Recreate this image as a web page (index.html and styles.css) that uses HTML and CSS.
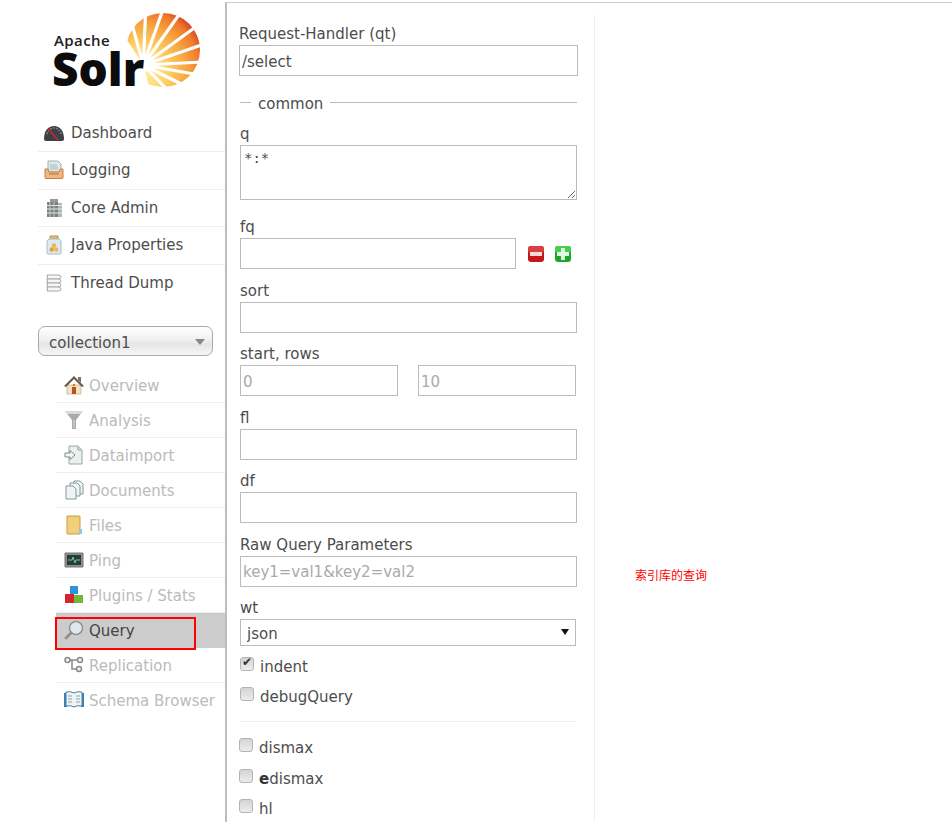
FILE: index.html
```html
<!DOCTYPE html>
<html lang="en">
<head>
    <meta charset="UTF-8">
    <title>Solr Admin</title>
    <link rel="stylesheet" href="styles.css">
</head>
<body>
    <div id="wrapper">
        <!-- Left menu -->
        <div id="sidebar">
            <svg class="logo" width="225" height="114" viewBox="0 0 225 114">
                <defs>
                    <radialGradient id="sun" gradientUnits="userSpaceOnUse" cx="140" cy="72" r="72">
                        <stop offset="0" stop-color="#fff2a6"/>
                        <stop offset="0.35" stop-color="#fdd56e"/>
                        <stop offset="0.65" stop-color="#f8a53f"/>
                        <stop offset="0.85" stop-color="#ef7a2c"/>
                        <stop offset="1" stop-color="#cf2f1f"/>
                    </radialGradient>
                </defs>
                <circle cx="163" cy="50" r="37" fill="url(#sun)"/>
                <g stroke="#fff" stroke-width="3.2">
                    <path d="M143.3 65L121.9 -12.1M143.3 65L146.7 -14.9M143.3 65L170 -10.4M143.3 65L189.6 -.2M143.3 65L208 18M143.3 65L219 39M143.3 65L223 61M143.3 65L222 79M143.3 65L215 101M143.3 65L199 122.5"/>
                </g>
                <path d="M143.3 65L99 -3L60 60L100 140L164 142Z" fill="#fff"/>
                <circle cx="143.3" cy="65" r="7" fill="#fff"/>
                <text class="logo-apache" x="54" y="46">Apache</text>
                <text class="logo-solr" x="52" y="86">Solr</text>
            </svg>

            <ul class="main-nav">
                <li>
                    <svg class="icon" viewBox="0 0 20 20"><path d="M0 16C0 8 4 3 10 3s10 5 10 13c0 1-1 2-2 2H2c-1 0-2-1-2-2z" fill="#3d4045"/><path d="M3 11C4 7 7 5 10 5s6 2 7 6" fill="none" stroke="#85888d" stroke-width="1.5" stroke-dasharray="1.5 1.5"/><path d="M4 6l10 11" stroke="#d4232b" stroke-width="1.6"/></svg>
                    Dashboard
                </li>
                <li>
                    <svg class="icon" viewBox="0 0 20 20"><path d="M4 1h10l3 3v8H4z" fill="#dfe9e8" stroke="#9db3b3"/><path d="M6 5h7M6 7h8M6 9h8" stroke="#a9bcbc"/><path d="M1 9h3l1 3h10l1-3h3v8.500q0 1-1 1H2q-1 0-1-1z" fill="#eeb680" stroke="#c9813f"/><path d="M5 14h10" stroke="#b9733a"/></svg>
                    Logging
                </li>
                <li>
                    <svg class="icon" viewBox="0 0 20 20"><path d="M3 4h11v15H3z" fill="#7d8080"/><path d="M14 5h4v14h-4z" fill="#aab9ac"/><path d="M3 7.500h15M3 11h15M3 15h15" stroke="#e7e9e7" stroke-width="1.200"/><path d="M6 4v15M10 4v15" stroke="#c5c8c6"/><path d="M6 1h8v3H6z" fill="#999"/></svg>
                    Core Admin
                </li>
                <li>
                    <svg class="icon" viewBox="0 0 20 20"><path d="M6 1h8v3H6z" fill="#e6bf6f" stroke="#b99143"/><path d="M5 4h10q2 1 2 3v11q0 1-1 1H4q-1 0-1-1V7q0-2 2-3z" fill="#dceaf5" stroke="#a9bccb"/><circle cx="10" cy="10.500" r="2.200" fill="#e9b949"/><circle cx="7.700" cy="14.500" r="2.200" fill="#dca536"/><circle cx="12.300" cy="14.500" r="2.200" fill="#e9b949"/></svg>
                    Java Properties
                </li>
                <li>
                    <svg class="icon" viewBox="0 0 20 20" fill="#f6f6f6" stroke="#a6a8a8"><path d="M3 2h11q3 0 3 2t-3 2H3q1-2 0-4z"/><path d="M3 6h11q3 0 3 2t-3 2H3q1-2 0-4z"/><path d="M3 10h11q3 0 3 2t-3 2H3q1-2 0-4z"/><path d="M3 14h11q3 0 3 2t-3 2H3q1-2 0-4z"/></svg>
                    Thread Dump
                </li>
            </ul>

            <div class="core-select">collection1</div>

            <ul class="core-nav">
                <li>
                    <svg class="icon" viewBox="0 0 20 20"><path d="M3 10h14v9H3z" fill="#f3e2c6" stroke="#b9a27f" stroke-width=".6"/><path d="M0 11L10 1l10 10-2 1-8-8-8 8z" fill="#66584c"/><path d="M14 2h3v6l-3-3z" fill="#8a6f5a"/><path d="M8 12h4v7H8z" fill="#b8521f"/><circle cx="10" cy="10" r="1.300" fill="#c9822f"/></svg>
                    Overview
                </li>
                <li>
                    <svg class="icon" viewBox="0 0 20 20"><path d="M1 1h18l-7 9v9H8v-9z" fill="#a9abab"/><path d="M1 1h18l-2 3H3z" fill="#d9dada"/><path d="M9.500 10h1v8h-1z" fill="#ddd"/></svg>
                    Analysis
                </li>
                <li>
                    <svg class="icon" viewBox="0 0 20 20"><path d="M5 1h9l4 4v14H5z" fill="#e9f0ee" stroke="#96a9a7"/><path d="M14 1v4h4" fill="#c9d6d4" stroke="#96a9a7"/><path d="M1 8h5V5.500l5 4.500-5 4.500V12H1z" fill="#f4f7f6" stroke="#788b89"/></svg>
                    Dataimport
                </li>
                <li>
                    <svg class="icon" viewBox="0 0 20 20" fill="#eef3f3" stroke="#86999b"><path d="M10 1h6l3 3v10h-9z"/><path d="M6 3h7l3 3v10H6z"/><path d="M2 6h7l3 3v10H2z"/></svg>
                    Documents
                </li>
                <li>
                    <svg class="icon" viewBox="0 0 20 20"><path d="M3 1h12q1 0 1 1v17H3z" fill="#f2cf7c" stroke="#c99a3e"/><path d="M15 14h3v5h-3z" fill="#8fc6e3"/></svg>
                    Files
                </li>
                <li>
                    <svg class="icon" viewBox="0 0 20 20"><path d="M1 3h18v14H1z" fill="#8c9190" stroke="#777"/><path d="M3 5h14v10H3z" fill="#2f3a3a"/><path d="M4 10h4l1-3 2 6 1-3h4" fill="none" stroke="#53d49c"/></svg>
                    Ping
                </li>
                <li>
                    <svg class="icon" viewBox="0 0 20 20"><path d="M6 1h8v8H6z" fill="#2b94d9"/><path d="M1 9h9v9H1z" fill="#d9232d"/><path d="M10 10h9v8h-9z" fill="#70ba3a"/></svg>
                    Plugins / Stats
                </li>
                <li class="active">
                    <svg class="icon" viewBox="0 0 20 20"><circle cx="12" cy="8" r="6.500" fill="#dfe8ee" stroke="#8f9396" stroke-width="1.500"/><path d="M7 13l-5 5" stroke="#8f8f8f" stroke-width="2.800" stroke-linecap="round"/></svg>
                    Query
                    <span class="annotation-box"></span>
                </li>
                <li>
                    <svg class="icon" viewBox="0 0 20 20" fill="#f2f2f2" stroke="#8b8b8b" stroke-width="1.500"><path d="M3 5h12M8 5v9h6" fill="none"/><circle cx="3.500" cy="5" r="2.500"/><circle cx="16" cy="5" r="2.500"/><circle cx="15" cy="14" r="2.500"/></svg>
                    Replication
                </li>
                <li>
                    <svg class="icon" viewBox="0 0 20 20"><path d="M0 3h3v14H0zM17 3h3v14h-3z" fill="#3a7fb8"/><path d="M2 2q5-1 8 1 3-2 8-1v14q-5-1-8 1-3-2-8-1z" fill="#eef3f3" stroke="#4b7ea6"/><path d="M4 6h4M4 9h4M4 12h4M12 6h4M12 9h4M12 12h4" stroke="#8ba3b3"/></svg>
                    Schema Browser
                </li>
            </ul>
        </div>

        <!-- Query form -->
        <div id="content">
            <form id="queryForm">
                <div class="field handler">
                    <label>Request-Handler (qt)</label>
                    <input type="text" value="/select">
                </div>

                <div class="legend"><span>common</span></div>

                <div class="field first">
                    <label>q</label>
                    <textarea>*:*</textarea>
                </div>

                <div class="field fq">
                    <label>fq</label>
                    <div class="fq-row">
                        <input type="text">
                        <svg class="small-btn" viewBox="0 0 18 18"><rect x="1" y="1" width="16" height="16" rx="3" fill="#c3171c"/><rect x="1" y="1" width="16" height="7" rx="3" fill="#dc3d3f"/><rect x="3" y="7" width="12" height="4" fill="#f3dcdc"/></svg>
                        <svg class="small-btn" viewBox="0 0 18 18"><rect x="1" y="1" width="16" height="16" rx="3" fill="#1fa52b"/><rect x="1" y="1" width="16" height="7" rx="3" fill="#45cf4c"/><path d="M7 3h4v4h4v4h-4v4H7v-4H3V7h4z" fill="#e3f5e3"/></svg>
                    </div>
                </div>

                <div class="field">
                    <label>sort</label>
                    <input type="text">
                </div>

                <div class="field">
                    <label>start, rows</label>
                    <div class="pair">
                        <input type="text" placeholder="0">
                        <input type="text" placeholder="10">
                    </div>
                </div>

                <div class="field">
                    <label>fl</label>
                    <input type="text">
                </div>

                <div class="field">
                    <label>df</label>
                    <input type="text">
                </div>

                <div class="field">
                    <label>Raw Query Parameters</label>
                    <input type="text" placeholder="key1=val1&amp;key2=val2">
                </div>

                <div class="field wt">
                    <label>wt</label>
                    <div class="select-wrap">
                        <select><option>json</option></select>
                    </div>
                </div>

                <label class="check c-indent"><input type="checkbox" checked> indent</label>
                <label class="check c-debug"><input type="checkbox"> debugQuery</label>

                <div class="divider"></div>

                <label class="check c-dismax"><input type="checkbox"> dismax</label>
                <label class="check c-edismax"><input type="checkbox"> <span><b>e</b>dismax</span></label>
                <label class="check c-hl"><input type="checkbox"> hl</label>
            </form>

            <div class="note">索引库的查询</div>
        </div>
    </div>
</body>
</html>
```

FILE: styles.css
```css
html, body {
    margin: 0;
    height: 100%;
    overflow: hidden;
    background-color: #fff;
}
body {
    font-family: "DejaVu Sans", Verdana, sans-serif;
    font-size: 15px;
    color: #4d4d4d;
}
ul {
    list-style: none;
    margin: 0;
    padding: 0;
}
#wrapper {
    display: flex;
    height: 100%;
}

/* Left menu */
#sidebar {
    width: 225px;
    flex-shrink: 0;
}
.logo {
    display: block;
    margin-bottom: .5px;
}
.logo-apache {
    font-family: "Open Sans", sans-serif;
    font-size: 15px;
    font-weight: 600;
    fill: #222;
    letter-spacing: .4px;
}
.logo-solr {
    font-family: "Open Sans", sans-serif;
    font-size: 46px;
    font-weight: 800;
    fill: #0c0c0c;
}
.icon {
    width: 20px;
    height: 20px;
    flex-shrink: 0;
}
.main-nav {
    margin-left: 38px;
}
.main-nav li {
    display: flex;
    align-items: center;
    gap: 7px;
    height: 37.5px;
    box-sizing: border-box;
    padding-left: 6px;
    border-bottom: 1px solid #eee;
}
.main-nav li:last-child {
    border-bottom: 0;
}
.core-select {
    margin: 24px 12px 0 38px;
    height: 30px;
    box-sizing: border-box;
    padding-left: 10px;
    line-height: 32px;
    border: 1px solid #aaa;
    border-radius: 7px;
    background: linear-gradient(#fff, #f0f0f0 45%, #e6e6e6 60%, #f6f6f6);
    position: relative;
}
.core-select::after {
    content: "";
    position: absolute;
    right: 7px;
    top: 12px;
    border: 5px solid transparent;
    border-top: 6px solid #888;
    border-bottom: 0;
}
.core-nav {
    margin: 11.5px 0 0 56px;
}
.core-nav li {
    display: flex;
    align-items: center;
    gap: 5px;
    height: 35px;
    box-sizing: border-box;
    padding: 2px 0 0 8px;
    color: #bbb;
    border-bottom: 1px solid #eee;
    position: relative;
}
.core-nav .icon {
    margin-top: -2px;
}
.core-nav li:last-child {
    border-bottom: 0;
}
.core-nav li.active {
    background-color: #ccc;
    color: #444;
    border-bottom: 0;
}
.annotation-box {
    position: absolute;
    left: -1px;
    top: 4px;
    width: 137px;
    height: 29px;
    border: 2px solid #f00;
}

/* Query form */
#content {
    flex: 1;
    border-left: 2px solid #bdbdbd;
    border-top: 1px solid #ccc;
    margin-top: 2px;
    position: relative;
}
#queryForm {
    width: 368px;
    height: 100%;
    box-sizing: border-box;
    margin-top: 12px;
    padding: 8px 0 0 13px;
    border-right: 1px solid #eee;
}
.field label {
    display: block;
    height: 20px;
    line-height: 22px;
    margin-bottom: 2px;
}
.field input, .field textarea, .field select {
    display: block;
    width: 100%;
    height: 31px;
    box-sizing: border-box;
    margin: 0;
    padding: 2px 2px 0;
    border: 1px solid #bbb;
    border-radius: 0;
    font-family: "DejaVu Sans", Verdana, sans-serif;
    font-size: 15px;
    color: #4d4d4d;
    background-color: #fff;
    outline: 0;
}
.field {
    width: 337px;
    margin-top: 10.5px;
}
.field input::placeholder {
    color: #aaa;
    opacity: 1;
}
.field.handler {
    width: 339px;
    margin: 0 0 0 -1px;
}
.field.first {
    margin-top: 13px;
}
.field textarea {
    height: 55px;
    padding: 4px 3px;
    font-family: "DejaVu Sans Mono", monospace;
    font-size: 14px;
    resize: vertical;
}
.field.fq {
    margin-top: 16px;
}
.fq-row {
    display: flex;
    align-items: center;
}
.field .fq-row input {
    flex: 0 0 276px;
    margin-right: 11px;
}
.small-btn {
    width: 18px;
    height: 18px;
    margin-right: 9px;
    flex-shrink: 0;
}
.pair {
    display: flex;
    gap: 20px;
    width: 336px;
}
.legend {
    margin-top: 18px;
    height: 16px;
    width: 337px;
    display: flex;
    align-items: center;
    gap: 7px;
}
.legend::before {
    content: "";
    width: 11px;
    border-top: 1px solid #bbb;
}
.legend::after {
    content: "";
    flex: 1;
    border-top: 1px solid #bbb;
}
.legend span {
    padding: 4px 0 0 0;
}
.field.wt {
    width: 336px;
}
.select-wrap {
    position: relative;
}
.select-wrap::after {
    content: "";
    position: absolute;
    right: 7px;
    top: 10px;
    border: 4px solid transparent;
    border-top: 6px solid #111;
    border-bottom: 0;
}
.field select {
    height: 27px;
    padding-left: 6px;
    appearance: none;
    -webkit-appearance: none;
}
.check {
    display: flex;
    align-items: center;
    gap: 6px;
    height: 20px;
}
.check input {
    appearance: none;
    -webkit-appearance: none;
    width: 14px;
    height: 14px;
    margin: -6px 0 0 0;
    border: 1px solid #b4b4b4;
    border-radius: 3px;
    background: linear-gradient(#d4d4d4, #ececec);
    position: relative;
}
.check input:checked::before {
    content: "\2714";
    position: absolute;
    left: 1px;
    top: -3px;
    font-size: 12px;
    color: #333;
}
.check b {
    color: #333;
}
.c-indent {
    margin-top: 11px;
}
.c-debug {
    margin-top: 10px;
}
.divider {
    width: 336px;
    border-top: 1px solid #eee;
    margin: 14px 0 16px;
}
.c-dismax, .c-edismax, .c-hl {
    margin-left: -1px;
}
.c-edismax {
    margin-top: 11px;
}
.c-hl {
    margin-top: 10px;
}
.note {
    position: absolute;
    left: 408px;
    top: 563px;
    font-family: "Noto Sans CJK SC", sans-serif;
    font-size: 12px;
    color: #f00;
}
```
